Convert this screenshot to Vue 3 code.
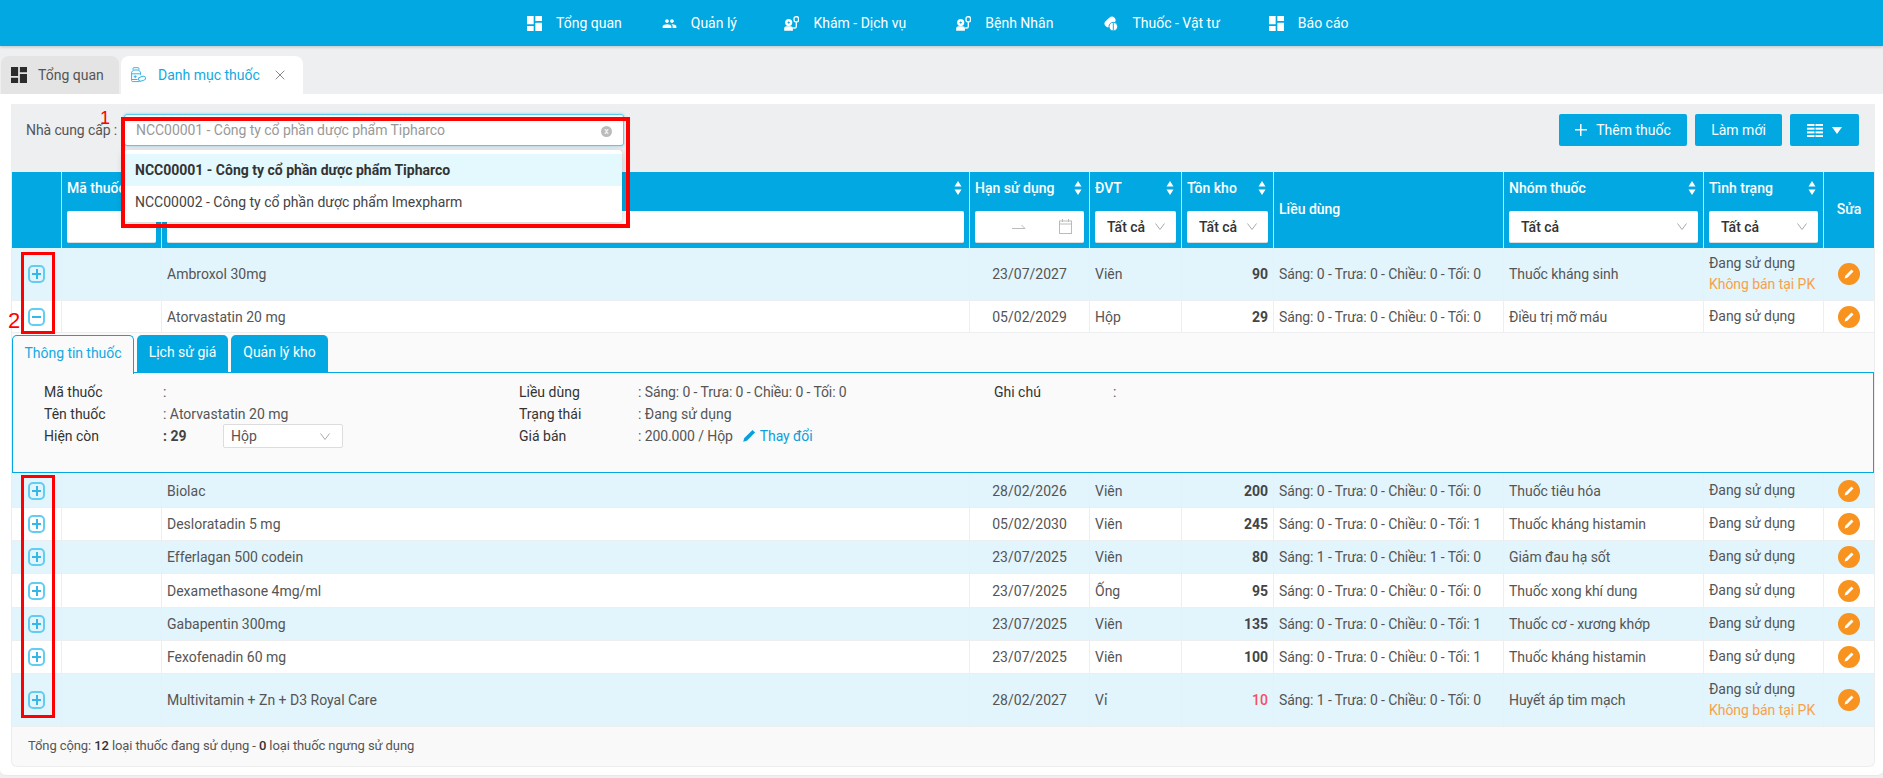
<script setup>
const nav = [
  { label: 'Tổng quan', icon: 'dash' },
  { label: 'Quản lý', icon: 'users' },
  { label: 'Khám - Dịch vụ', icon: 'doc' },
  { label: 'Bệnh Nhân', icon: 'doc' },
  { label: 'Thuốc - Vật tư', icon: 'pill' },
  { label: 'Báo cáo', icon: 'dash' }
]
const dashPath = 'M3 13h8V3H3v10zm0 8h8v-6H3v6zm10 0h8V11h-8v10zm0-18v6h8V3h-8z'
const rows1 = [
  { name: 'Ambroxol 30mg', date: '23/07/2027', unit: 'Viên', stock: 90, dose: 'Sáng: 0 - Trưa: 0 - Chiều: 0 - Tối: 0', group: 'Thuốc kháng sinh', noSale: true, h: 53, tint: true },
  { name: 'Atorvastatin 20 mg', date: '05/02/2029', unit: 'Hộp', stock: 29, dose: 'Sáng: 0 - Trưa: 0 - Chiều: 0 - Tối: 0', group: 'Điều trị mỡ máu', h: 32, open: true }
]
const rows2 = [
  { name: 'Biolac', date: '28/02/2026', unit: 'Viên', stock: 200, dose: 'Sáng: 0 - Trưa: 0 - Chiều: 0 - Tối: 0', group: 'Thuốc tiêu hóa', h: 34, tint: true },
  { name: 'Desloratadin 5 mg', date: '05/02/2030', unit: 'Viên', stock: 245, dose: 'Sáng: 0 - Trưa: 0 - Chiều: 0 - Tối: 1', group: 'Thuốc kháng histamin', h: 33 },
  { name: 'Efferlagan 500 codein', date: '23/07/2025', unit: 'Viên', stock: 80, dose: 'Sáng: 1 - Trưa: 0 - Chiều: 1 - Tối: 0', group: 'Giảm đau hạ sốt', h: 33, tint: true },
  { name: 'Dexamethasone 4mg/ml', date: '23/07/2025', unit: 'Ống', stock: 95, dose: 'Sáng: 0 - Trưa: 0 - Chiều: 0 - Tối: 0', group: 'Thuốc xong khí dung', h: 34 },
  { name: 'Gabapentin 300mg', date: '23/07/2025', unit: 'Viên', stock: 135, dose: 'Sáng: 0 - Trưa: 0 - Chiều: 0 - Tối: 1', group: 'Thuốc cơ - xương khớp', h: 33, tint: true },
  { name: 'Fexofenadin 60 mg', date: '23/07/2025', unit: 'Viên', stock: 100, dose: 'Sáng: 0 - Trưa: 0 - Chiều: 0 - Tối: 1', group: 'Thuốc kháng histamin', h: 33 },
  { name: 'Multivitamin + Zn + D3 Royal Care', date: '28/02/2027', unit: 'Vỉ', stock: 10, low: true, dose: 'Sáng: 1 - Trưa: 0 - Chiều: 0 - Tối: 0', group: 'Huyết áp tim mạch', noSale: true, h: 53, tint: true }
]
const groups = [rows1, rows2]
const cols = [49, 100, 808, 120, 92, 92, 230, 200, 120, 51]
</script>

<template>
  <div class="page">
    <header class="topbar">
      <a v-for="item in nav" :key="item.label" class="nav-item">
        <svg v-if="item.icon === 'dash'" class="nav-icon" viewBox="3 3 18 18"><path :d="dashPath" fill="#fff" /></svg>
        <svg v-else-if="item.icon === 'users'" class="nav-icon" viewBox="0 0 24 24"><path fill="#fff" d="M16 11c1.66 0 2.99-1.34 2.99-3S17.66 5 16 5c-1.66 0-3 1.34-3 3s1.34 3 3 3zm-8 0c1.66 0 2.99-1.34 2.99-3S9.66 5 8 5C6.34 5 5 6.34 5 8s1.34 3 3 3zm0 2c-2.33 0-7 1.17-7 3.5V19h14v-2.5c0-2.33-4.67-3.5-7-3.5zm8 0c-.29 0-.62.02-.97.05 1.16.84 1.97 1.97 1.97 3.45V19h6v-2.5c0-2.33-4.67-3.5-7-3.5z" /></svg>
        <svg v-else-if="item.icon === 'doc'" class="nav-icon" viewBox="0 0 16 16">
          <circle cx="5" cy="7" r="3.800" fill="#fff" />
          <path d="M3.800 7h2.400M5 5.800v2.400" stroke="#02a8e2" stroke-width="1" />
          <path d="M.2 15.800v-2.600c0-1.400 1.300-2.300 2.800-2.300h4c1.500 0 2.500.9 2.500 2.300v2.600z" fill="#fff" />
          <path d="M9.800 12.800h1.600c1 0 1.700-.7 1.700-1.700V6" fill="none" stroke="#fff" stroke-width="1.400" />
          <rect x="10.700" y=".8" width="4.800" height="5.400" rx="2" fill="none" stroke="#fff" stroke-width="1.400" />
        </svg>
        <svg v-else class="nav-icon" viewBox="0 0 16 16">
          <rect x="1" y="2.500" width="13" height="7.600" rx="3.800" transform="rotate(-42 7.500 6.300)" fill="#fff" />
          <circle cx="11" cy="11.300" r="4.600" fill="#fff" stroke="#02a8e2" stroke-width="1" />
          <path d="M11 7v8.600" stroke="#02a8e2" stroke-width="1" />
        </svg>
        <span>{{ item.label }}</span>
      </a>
    </header>

    <div class="tabbar">
      <div class="tab tab-off">
        <svg class="tab-icon" viewBox="3 3 18 18"><path :d="dashPath" fill="#2b2b2b" /></svg>
        <span>Tổng quan</span>
      </div>
      <div class="tab tab-on">
        <svg class="tab-icon" viewBox="0 0 16 16" fill="none" stroke="#35b7e8" stroke-width="1">
          <rect x="3" y=".7" width="6" height="2.300" rx=".6" />
          <path d="M3.500 3 1.600 5.200v8.300c0 .7.500 1.100 1.100 1.100h6.800M8.500 3l2 2.200v2.600M1.600 6.800h8.900M1.600 12.500h6" />
          <path d="M5.200 8.200v3M3.700 9.700h3" />
          <rect x="8.600" y="9.700" width="7" height="4" rx="2" transform="rotate(-18 12 12)" />
        </svg>
        <span>Danh mục thuốc</span>
        <svg class="tab-close" viewBox="0 0 10 10"><path d="M.7.700l8.600 8.600M9.300.7.700 9.300" stroke="#888" stroke-width="1" /></svg>
      </div>
    </div>

    <main class="content">
      <section class="panel">
        <div class="toolbar">
          <label class="sup-label">Nhà cung cấp :</label>
          <div class="sup-select">
            <div class="sup-input">
              <span>NCC00001 - Công ty cổ phần dược phẩm Tipharco</span>
              <i class="clear">x</i>
            </div>
            <ul class="sup-menu">
              <li class="sel">NCC00001 - Công ty cổ phần dược phẩm Tipharco</li>
              <li>NCC00002 - Công ty cổ phần dược phẩm Imexpharm</li>
            </ul>
          </div>
          <div class="actions">
            <button class="btn add"><span class="plus"></span>Thêm thuốc</button>
            <button class="btn refresh">Làm mới</button>
            <button class="btn cols-btn">
              <svg width="16" height="13" viewBox="0 0 16 13" fill="#fff">
                <rect y="0" width="7.500" height="2" /><rect x="8.500" y="0" width="7.500" height="2" />
                <rect y="3.700" width="7.500" height="2" /><rect x="8.500" y="3.700" width="7.500" height="2" />
                <rect y="7.400" width="7.500" height="2" /><rect x="8.500" y="7.400" width="7.500" height="2" />
                <rect y="11" width="7.500" height="2" /><rect x="8.500" y="11" width="7.500" height="2" />
              </svg>
              <svg width="10" height="7" viewBox="0 0 10 7"><path d="M0 0h10L5 7z" fill="#fff" /></svg>
            </button>
          </div>
        </div>

        <table class="grid">
          <colgroup><col v-for="(w, i) in cols" :key="i" :style="{ width: w + 'px' }" /></colgroup>
          <thead>
            <tr>
              <th></th>
              <th>
                <div class="th-title"><span>Mã thuốc</span></div>
                <div class="filter"></div>
              </th>
              <th>
                <div class="th-title"><span>Tên thuốc</span><svg class="sort" viewBox="0 0 8 14"><path d="M4 0l3.500 5.500h-7zM4 14 .5 8.500h7z" /></svg></div>
                <div class="filter"></div>
              </th>
              <th>
                <div class="th-title"><span>Hạn sử dụng</span><svg class="sort" viewBox="0 0 8 14"><path d="M4 0l3.500 5.500h-7zM4 14 .5 8.500h7z" /></svg></div>
                <div class="filter date">
                  <svg width="14" height="8" viewBox="0 0 14 8"><path d="M0 5.500h13L9.500 2" fill="none" stroke="#bbb" /></svg>
                  <svg width="13" height="15" viewBox="0 0 13 15" fill="none" stroke="#bbb"><rect x=".5" y="2" width="12" height="12.500" /><path d="M.5 5h12M3.500 0v3M9.500 0v3" /></svg>
                </div>
              </th>
              <th>
                <div class="th-title"><span>ĐVT</span><svg class="sort" viewBox="0 0 8 14"><path d="M4 0l3.500 5.500h-7zM4 14 .5 8.500h7z" /></svg></div>
                <div class="filter sel"><span>Tất cả</span><svg class="chev" viewBox="0 0 10 7"><path d="M.5.500 5 6.500 9.500.5" /></svg></div>
              </th>
              <th>
                <div class="th-title"><span>Tồn kho</span><svg class="sort" viewBox="0 0 8 14"><path d="M4 0l3.500 5.500h-7zM4 14 .5 8.500h7z" /></svg></div>
                <div class="filter sel"><span>Tất cả</span><svg class="chev" viewBox="0 0 10 7"><path d="M.5.500 5 6.500 9.500.5" /></svg></div>
              </th>
              <th class="th-mid">Liều dùng</th>
              <th>
                <div class="th-title"><span>Nhóm thuốc</span><svg class="sort" viewBox="0 0 8 14"><path d="M4 0l3.500 5.500h-7zM4 14 .5 8.500h7z" /></svg></div>
                <div class="filter sel"><span>Tất cả</span><svg class="chev" viewBox="0 0 10 7"><path d="M.5.500 5 6.500 9.500.5" /></svg></div>
              </th>
              <th>
                <div class="th-title"><span>Tình trạng</span><svg class="sort" viewBox="0 0 8 14"><path d="M4 0l3.500 5.500h-7zM4 14 .5 8.500h7z" /></svg></div>
                <div class="filter sel"><span>Tất cả</span><svg class="chev" viewBox="0 0 10 7"><path d="M.5.500 5 6.500 9.500.5" /></svg></div>
              </th>
              <th class="th-mid th-center">Sửa</th>
            </tr>
          </thead>
          <tbody v-for="(group, gi) in groups" :key="gi">
            <template v-for="r in group" :key="r.name">
              <tr :class="{ tint: r.tint }" :style="{ height: r.h + 'px' }">
                <td class="c-exp">
                  <span class="exp"><i class="h"></i><i v-if="!r.open" class="v"></i></span>
                </td>
                <td></td>
                <td>{{ r.name }}</td>
                <td class="c-date">{{ r.date }}</td>
                <td>{{ r.unit }}</td>
                <td class="c-stock" :class="{ low: r.low }">{{ r.stock }}</td>
                <td class="c-dose">{{ r.dose }}</td>
                <td class="c-group">{{ r.group }}</td>
                <td class="c-status">
                  <div>Đang sử dụng</div>
                  <div v-if="r.noSale" class="nosale">Không bán tại PK</div>
                </td>
                <td class="c-edit">
                  <span class="edit"><svg width="12" height="12" viewBox="0 0 12 12"><path d="M8.500 1.500l2 2-6.200 6.200-2.700.7.700-2.700z" fill="#fff" /></svg></span>
                </td>
              </tr>
              <tr v-if="r.open" class="detail-row">
                <td colspan="10">
                  <div class="d-tabs">
                    <div class="d-tab active">Thông tin thuốc</div>
                    <div class="d-tab t2">Lịch sử giá</div>
                    <div class="d-tab t3">Quản lý kho</div>
                  </div>
                  <div class="d-box">
                    <div class="d-col">
                      <div class="d-row"><b>Mã thuốc</b><span>:</span></div>
                      <div class="d-row"><b>Tên thuốc</b><span>: Atorvastatin 20 mg</span></div>
                      <div class="d-row"><b>Hiện còn</b><span class="qty">: 29</span>
                        <div class="unit-sel"><span>Hộp</span><svg class="chev" viewBox="0 0 10 7"><path d="M.5.500 5 6.500 9.500.5" /></svg></div>
                      </div>
                    </div>
                    <div class="d-col">
                      <div class="d-row"><b>Liều dùng</b><span class="tight">: Sáng: 0 - Trưa: 0 - Chiều: 0 - Tối: 0</span></div>
                      <div class="d-row"><b>Trạng thái</b><span>: Đang sử dụng</span></div>
                      <div class="d-row"><b>Giá bán</b><span class="tight">: 200.000 / Hộp</span>
                        <a class="change"><svg width="14" height="14" viewBox="0 0 12 12"><path d="M9 .8l2.200 2.200-7 7L1 11l1-3.200z" fill="#0a9fdc" /></svg><span class="tight">Thay đổi</span></a>
                      </div>
                    </div>
                    <div class="d-col">
                      <div class="d-row"><b>Ghi chú</b><span>:</span></div>
                    </div>
                  </div>
                </td>
              </tr>
            </template>
          </tbody>
        </table>

        <footer class="foot">Tổng cộng: <b>12</b> loại thuốc đang sử dụng - <b>0</b> loại thuốc ngưng sử dụng</footer>
      </section>
    </main>

    <div class="mark box-a"></div>
    <div class="mark box-b"></div>
    <div class="mark box-c"></div>
    <span class="num num-1">1</span>
    <span class="num num-2">2</span>
  </div>
</template>

<style>
html, body { margin: 0; background: #eeeff1; }
</style>

<style scoped>
.page { position: relative; width: 1883px; height: 778px; overflow: hidden; font-family: Roboto, "Noto Sans", sans-serif; font-size: 14px; color: #555; background: #eeeff1; }
.topbar { height: 46px; background: #02a8e2; display: flex; align-items: center; padding-left: 527px; box-shadow: 0 1px 3px rgba(0,0,0,.2); position: relative; }
.nav-item { display: flex; align-items: center; gap: 14px; color: #fff; margin-right: 50px; white-space: nowrap; }
.nav-item:nth-child(1) { margin-right: 40px; }
.nav-item:nth-child(2) { margin-right: 47.500px; }
.nav-item:nth-child(5) { margin-right: 49px; }
.nav-icon { width: 15px; height: 15px; flex: none; }
.tabbar { height: 38px; margin-top: 10px; padding-left: 1px; display: flex; gap: 2px; }
.tab { display: flex; align-items: center; height: 38px; box-sizing: border-box; border-radius: 8px 8px 0 0; }
.tab-off { width: 118px; padding-left: 10px; background: #e4e4e4; gap: 11px; }
.tab-on { width: 182px; padding-left: 9px; background: #fff; color: #12a9e2; gap: 12px; }
.tab-icon { width: 16px; height: 16px; flex: none; }
.tab-close { width: 10px; height: 10px; margin-left: 3px; }
.content { background: #fff; height: 682px; padding: 10px 8px 0 11px; box-sizing: border-box; border-radius: 0 0 6px 6px; border-bottom: 1px solid #e8e8e8; }
.panel { width: 1864px; height: 663px; box-sizing: border-box; border: 1px solid #ededed; border-top: 0; border-radius: 0 0 6px 6px; background: #f9f9f9; }
.toolbar { height: 68px; background: #eeeff1; display: flex; align-items: flex-start; padding: 10px 16px 0 15px; box-sizing: border-box; margin: 0 -1px; }
.sup-label { width: 98px; line-height: 32px; flex: none; letter-spacing: -.1px; }
.sup-select { position: relative; width: 500px; }
.sup-input { height: 32px; box-sizing: border-box; background: #fff; border: 1px solid #5ccaf1; border-radius: 3px; box-shadow: 0 0 3px rgba(2,168,226,.45); display: flex; align-items: center; justify-content: space-between; padding: 0 11px 0 11px; color: #999; letter-spacing: -.05px; }
.clear { width: 11px; height: 11px; border-radius: 50%; background: #bcbcbc; color: #fff; font-size: 9px; line-height: 10px; text-align: center; font-style: normal; margin-top: 3px; }
.sup-menu { position: absolute; z-index: 5; left: 0; top: 36px; width: 498px; height: 72px; box-sizing: border-box; margin: 0; padding: 4px 0; list-style: none; background: #fff; border-radius: 4px; box-shadow: 0 2px 8px rgba(0,0,0,.2); color: #444; }
.sup-menu li { height: 32px; line-height: 32px; padding-left: 11px; }
.sup-menu li.sel { background: #e4f9fe; font-weight: 700; color: #333; }
.actions { margin-left: auto; display: flex; gap: 8px; }
.btn { height: 32px; border: 0; border-radius: 2px; background: #02a8e2; color: #fff; font: inherit; display: flex; align-items: center; justify-content: center; padding: 0; }
.add { width: 128px; gap: 9px; }
.plus { width: 12px; height: 12px; background: linear-gradient(#fff,#fff) center/100% 1.5px no-repeat, linear-gradient(#fff,#fff) center/1.5px 100% no-repeat; }
.refresh { width: 87px; }
.cols-btn { width: 69px; gap: 9px; }
.grid { width: 1862px; table-layout: fixed; border-collapse: separate; border-spacing: 0; }
.grid th { height: 76px; padding: 0 5px 5px 5px; box-sizing: border-box; background: #02a8e2; color: #fff; font-weight: 500; text-align: left; vertical-align: top; border-left: 1px solid #c5e9f7; }
.grid th:first-child { border-left: 0; }
.grid th.th-mid { vertical-align: middle; padding-bottom: 2px; }
.grid th.th-center { text-align: center; padding-left: 0; padding-right: 0; }
.th-title { height: 32px; display: flex; align-items: center; justify-content: space-between; padding-right: 2px; white-space: nowrap; overflow: hidden; }
.sort { width: 8px; height: 14px; fill: #fff; flex: none; }
.filter { height: 32px; margin-top: 7px; background: #fff; border-radius: 2px; box-sizing: border-box; border-bottom: 1px solid #ddd; display: flex; align-items: center; }
.filter.sel { justify-content: space-between; padding: 0 11px 0 12px; color: #333; font-weight: 500; }
.filter.date { justify-content: flex-end; gap: 33px; padding-right: 12px; }
.chev { width: 10px; height: 7px; fill: none; stroke: #aaa; stroke-width: 1; flex: none; }
.grid td { padding: 0 5px 0 5px; box-sizing: border-box; border-bottom: 1px solid #eceeef; border-left: 1px solid #eceeef; background: #fff; white-space: nowrap; }
.grid td:first-child { border-left: 0; }
.grid tr.tint td { background: #e2f4fc; }
.c-exp { text-align: center; }
.grid td.c-exp { padding: 0; }
.exp { display: inline-flex; position: relative; width: 17px; height: 18px; box-sizing: border-box; border: 2px solid #62cdf3; border-radius: 5px; background: #fff; vertical-align: middle; }
.tint .exp { background: #e2f4fc; }
.exp .h { position: absolute; left: 2px; right: 2px; top: 6px; height: 2px; background: #35b7e8; }
.exp .v { position: absolute; top: 2px; bottom: 2px; left: 5.500px; width: 2px; background: #35b7e8; }
.c-date { text-align: center; }
.c-stock { text-align: right; font-weight: 700; color: #444; }
.c-stock.low { color: #f4505f; font-weight: 500; }
.c-dose { letter-spacing: -.1px; }
.c-group { letter-spacing: -.05px; }
.c-status { line-height: 21.500px; letter-spacing: -.05px; }
.nosale { color: #f9a148; }
.grid td.c-edit { text-align: center; padding: 0; }
.edit { display: inline-flex; width: 22px; height: 22px; border-radius: 50%; background: #f7931e; align-items: center; justify-content: center; vertical-align: middle; }
.grid .detail-row td { height: 141px; border: 0; background: #fafafa; padding: 2px 0 1px; vertical-align: top; }
.d-tabs { display: flex; gap: 3px; height: 38px; position: relative; z-index: 1; margin-bottom: -1px; }
.d-tab { background: #02a8e2; color: #fff; border-radius: 5px 5px 0 0; line-height: 34px; text-align: center; box-sizing: border-box; }
.d-tab.t2 { width: 91px; }
.d-tab.t3 { width: 97px; }
.d-tab.active { width: 122px; background: #fafafa; color: #12a9e2; border: 1px solid #02a8e2; border-bottom: 0; line-height: 35px; height: 39px; letter-spacing: -.05px; }
.d-box { height: 101px; box-sizing: border-box; border: 1px solid #02a8e2; padding: 8px 0 0 31px; display: flex; }
.d-col { width: 475px; flex: none; }
.d-row { display: flex; align-items: center; height: 22px; }
.d-row b { width: 119px; font-weight: 400; color: #333; flex: none; }
.tight { letter-spacing: -.1px; }
.qty { font-weight: 700; color: #444; width: 60px; }
.unit-sel { width: 120px; height: 24px; box-sizing: border-box; border: 1px solid #ddd; border-radius: 2px; background: #fff; display: flex; align-items: center; justify-content: space-between; padding: 0 12px 0 7px; flex: none; }
.change { display: inline-flex; align-items: center; gap: 4px; color: #0a9fdc; margin-left: 9px; }
.foot { height: 39px; line-height: 38px; padding-left: 16px; font-size: 13px; letter-spacing: -.1px; }
.foot b { font-weight: 500; color: #333; }
.mark { position: absolute; box-sizing: border-box; border: 3px solid #f00; z-index: 10; pointer-events: none; }
.box-a { left: 121px; top: 117px; width: 509px; height: 111px; border-width: 4px; }
.box-b { left: 21px; top: 252px; width: 34px; height: 82px; }
.box-c { left: 21px; top: 475px; width: 34px; height: 243px; }
.num { position: absolute; color: #f00; z-index: 10; line-height: .8; font-family: "Liberation Sans", sans-serif; }
.num-1 { left: 100px; top: 111px; font-size: 18px; }
.num-2 { left: 8px; top: 312px; font-size: 22px; }
</style>
